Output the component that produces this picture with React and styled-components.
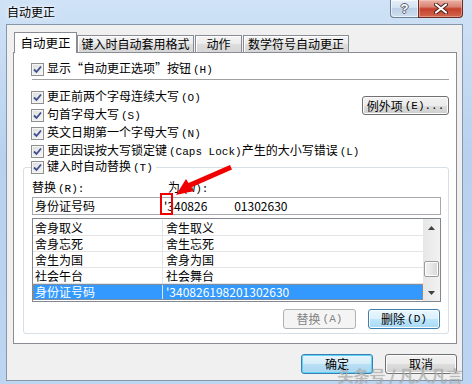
import React from 'react';
import styled, { createGlobalStyle } from 'styled-components';

const GlobalStyle = createGlobalStyle`
    html, body {
        margin: 0;
        padding: 0;
    }
    body {
        width: 472px;
        height: 384px;
        overflow: hidden;
        font-family: "Noto Sans CJK SC", "Noto Sans", sans-serif;
        font-size: 12px;
        color: #000;
    }
`;

const Window = styled.div`
    position: relative;
    width: 472px;
    height: 384px;
    box-sizing: border-box;
    padding: 0 9px 3px 6px;
    display: flex;
    flex-direction: column;
    overflow: hidden;
    background: linear-gradient(180deg, #cfe2f6 0%, #b8d2ee 40%, #bcd6f2 100%);
`;

const TitleBar = styled.div`
    height: 24px;
    flex-shrink: 0;
    display: flex;
    align-items: flex-start;
    justify-content: space-between;
`;

const Title = styled.div`
    padding: 5px 0 0 1px;
    font-size: 12px;
    line-height: 14px;
    text-shadow: 0 0 6px #fff, 0 0 3px #fff;
`;

const Controls = styled.div`
    display: flex;
`;

const HelpButton = styled.div`
    width: 28px;
    height: 18px;
    box-sizing: border-box;
    border: 1px solid #6a7f98;
    border-top: none;
    border-right: none;
    border-radius: 0 0 0 4px;
    background: linear-gradient(180deg, #e6eff9 0%, #d3e2f2 45%, #bccfe6 50%, #cfdff0 100%);
    box-shadow: inset 0 0 0 1px rgba(255, 255, 255, 0.6);
    display: flex;
    align-items: center;
    justify-content: center;
    font: bold 13px "Liberation Sans", sans-serif;
    color: #fff;
    text-shadow: 1px 0 0 #55606e, -1px 0 0 #55606e, 0 1px 0 #55606e, 0 -1px 0 #55606e;
`;

const CloseButton = styled.div`
    width: 45px;
    height: 18px;
    box-sizing: border-box;
    border: 1px solid #6b2c22;
    border-top: none;
    border-radius: 0 0 4px 0;
    background: linear-gradient(180deg, #eab2a6 0%, #d98372 40%, #c4402b 52%, #d2664f 100%);
    box-shadow: inset 0 0 0 1px rgba(255, 220, 210, 0.4);
    display: flex;
    align-items: center;
    justify-content: center;
`;

const Client = styled.div`
    flex: 1;
    display: flex;
    flex-direction: column;
    border: 1px solid #8796a9;
    background: #f0f0f0;
    padding: 7px 5px 0 6px;
`;

const TabStrip = styled.div`
    position: relative;
    z-index: 1;
    display: flex;
    align-items: flex-end;
    height: 21px;
    padding-left: 1px;
    margin-bottom: -1px;
`;

const Tab = styled.div`
    box-sizing: border-box;
    width: ${(p) => p.$w}px;
    margin-left: ${(p) => (p.$gap ? 1 : 0)}px;
    border: 1px solid #898c95;
    display: flex;
    align-items: center;
    justify-content: center;
    line-height: 14px;
    ${(p) =>
        p.$active
            ? `
        height: 21px;
        border-bottom: none;
        background: #fff;
        font-size: 12.5px;
    `
            : `
        height: 17px;
        margin-bottom: 1px;
        border-bottom: none;
        background: linear-gradient(180deg, #f4f4f4 0%, #ebebeb 50%, #dddddd 51%, #d6d6d6 100%);
        box-shadow: inset 1px 1px 0 #fff;
    `}
`;

const Pane = styled.div`
    height: 292px;
    box-sizing: border-box;
    border: 1px solid #898c95;
    background: #fff;
    padding: 7px 7px 0 9px;
`;

const CheckRow = styled.div`
    display: flex;
    align-items: center;
    height: 18px;
    margin-left: 8px;
    gap: 3px;
    white-space: nowrap;
    line-height: 14px;
`;

const Box = styled.span`
    width: 13px;
    height: 13px;
    box-sizing: border-box;
    flex-shrink: 0;
    border: 1px solid #8e8f8f;
    background: linear-gradient(135deg, #dcdcdc 0%, #f7f7f7 100%);
    box-shadow: inset 0 0 0 1px #f4f4f4;
    display: flex;
    align-items: center;
    justify-content: center;
`;

const Key = styled.span`
    font-family: "Liberation Mono", monospace;
    font-size: 11px;
    margin-left: 2px;
`;

const Separator = styled.div`
    margin: 1px 0 8px 9px;
    border-top: 1px solid #a0a0a0;
`;

const Section = styled.div`
    display: flex;
    justify-content: space-between;
    align-items: flex-start;
`;

const Column = styled.div`
    display: flex;
    flex-direction: column;
`;

const Button = styled.div`
    box-sizing: border-box;
    width: ${(p) => p.$w}px;
    height: ${(p) => p.$h || 19}px;
    margin-top: ${(p) => p.$top || 0}px;
    border: 1px solid #707070;
    border-radius: 3px;
    display: flex;
    align-items: center;
    justify-content: center;
    white-space: nowrap;
    line-height: 14px;
    background: linear-gradient(180deg, #f2f2f2 0%, #ebebeb 50%, #dddddd 51%, #cfcfcf 100%);
    box-shadow: inset 0 0 0 1px #fcfcfc;
    ${(p) =>
        p.$variant === 'disabled' &&
        `
        border-color: #adb2b5;
        background: #f4f4f4;
        color: #838383;
        box-shadow: none;
    `}
    ${(p) =>
        p.$variant === 'hot' &&
        `
        border-color: #3c7fb1;
        background: linear-gradient(180deg, #eaf6fd 0%, #d9f0fc 50%, #bee6fd 51%, #a7d9f5 100%);
    `}
    ${(p) =>
        p.$variant === 'default' &&
        `
        border-color: #3c7fb1;
        background: linear-gradient(180deg, #e8f5fc 0%, #d4ecf9 50%, #b9e0f5 51%, #a9d6f0 100%);
        box-shadow: inset 0 0 0 1px #5fd2f8;
    `}
`;

const Group = styled.fieldset`
    margin: -2px 0 0;
    padding: 0 7px 4px 8px;
    min-width: 0;
    border: 1px solid #d5dfe5;
    border-radius: 3px;
`;

const Legend = styled.legend`
    padding: 0 3px 0 0;
    margin-left: -1px;
    height: 18px;
    display: flex;
    align-items: center;
    gap: 3px;
    line-height: 14px;
`;

const LabelRow = styled.div`
    display: flex;
    height: 16px;
    margin-top: 4px;
    align-items: center;
    line-height: 14px;
`;

const Label = styled.div`
    width: ${(p) => p.$w || 'auto'};
`;

const InputRow = styled.div`
    display: flex;
    height: 18px;
    box-sizing: border-box;
    margin-top: 1px;
    border: 1px solid #a6a9ae;
    align-items: center;
    line-height: 14px;
`;

const InputCell = styled.div`
    width: ${(p) => p.$w || 'auto'};
    flex: ${(p) => (p.$w ? 'none' : 1)};
    padding-left: ${(p) => p.$pad}px;
    white-space: pre;
`;

const List = styled.div`
    display: flex;
    height: 84px;
    box-sizing: border-box;
    margin-top: 3px;
    border: 1px solid #828790;
`;

const Rows = styled.div`
    flex: 1;
    padding-top: 1px;
`;

const Row = styled.div`
    display: flex;
    height: 16px;
    box-sizing: border-box;
    border-bottom: 1px solid #e4e4e4;
    line-height: 14px;
    ${(p) =>
        p.$selected &&
        `
        background: #3399ff;
        color: #fff;
        border-bottom: none;
        outline: 1px dotted #c5834a;
        outline-offset: -1px;
    `}
`;

const Cell = styled.div`
    display: flex;
    align-items: center;
    box-sizing: border-box;
    width: ${(p) => (p.$first ? '130px' : 'auto')};
    flex: ${(p) => (p.$first ? 'none' : 1)};
    padding-left: ${(p) => (p.$first ? 2 : 3)}px;
    border-right: ${(p) => (p.$first ? '1px solid #e4e4e4' : 'none')};
    white-space: nowrap;
`;

const ScrollBar = styled.div`
    width: 17px;
    display: flex;
    flex-direction: column;
    background: linear-gradient(90deg, #e6e6e6 0%, #f2f2f2 100%);
`;

const Arrow = styled.div`
    height: 17px;
    display: flex;
    align-items: center;
    justify-content: center;
`;

const Track = styled.div`
    flex: 1;
`;

const Thumb = styled.div`
    width: 15px;
    height: 16px;
    margin-left: 1px;
    box-sizing: border-box;
    border: 1px solid #9a9a9a;
    border-radius: 2px;
    background: linear-gradient(90deg, #f2f2f2 0%, #e6e6e6 50%, #d6d6d6 100%);
    box-shadow: inset 0 0 0 1px #fdfdfd;
`;

const ActionRow = styled.div`
    display: flex;
    justify-content: flex-end;
    gap: 12px;
    margin-top: 7px;
    padding-right: 1px;
`;

const BottomBar = styled.div`
    display: flex;
    justify-content: flex-end;
    gap: 12px;
    margin-top: 10px;
`;

const Marker = styled.div`
    position: absolute;
    left: 160px;
    top: 193px;
    width: 13px;
    height: 22px;
    box-sizing: border-box;
    border: 2px solid #f00000;
`;

const Pointer = styled.svg`
    position: absolute;
    left: 170px;
    top: 160px;
`;

const Watermark = styled.div`
    position: absolute;
    right: 9px;
    bottom: 0;
    font-size: 16px;
    line-height: 18px;
    color: rgba(190, 190, 190, 0.85);
    text-shadow: 0 0 1px rgba(90, 90, 90, 0.6);
    white-space: pre;
`;

const Check = () => (
    <Box>
        <svg width="9" height="9" viewBox="0 0 9 9">
            <path d="M1 4.5 L3.5 7 L8 1.5" fill="none" stroke="#3c4f8f" strokeWidth="1.8" />
        </svg>
    </Box>
);

const Option = ({ children }) => (
    <CheckRow>
        <Check />
        <span>{children}</span>
    </CheckRow>
);

const entries = [
    ['舍身取义', '舍生取义'],
    ['舍身忘死', '舍生忘死'],
    ['舍生为国', '舍身为国'],
    ['社会午台', '社会舞台'],
    ['身份证号码', "'340826198201302630"],
];

export default () => {
    return (
        <Window>
            <GlobalStyle />
            <TitleBar>
                <Title>自动更正</Title>
                <Controls>
                    <HelpButton>?</HelpButton>
                    <CloseButton>
                        <svg width="14" height="11" viewBox="0 0 14 11">
                            <path d="M2 1.5 L12 9.5 M12 1.5 L2 9.5" stroke="#4a1d18" strokeWidth="4" strokeLinecap="round" />
                            <path d="M2 1.5 L12 9.5 M12 1.5 L2 9.5" stroke="#fff" strokeWidth="2.2" strokeLinecap="round" />
                        </svg>
                    </CloseButton>
                </Controls>
            </TitleBar>

            <Client>
                <TabStrip>
                    <Tab $active $w={63}>自动更正</Tab>
                    <Tab $w={117}>键入时自动套用格式</Tab>
                    <Tab $gap $w={47}>动作</Tab>
                    <Tab $gap $w={106}>数学符号自动更正</Tab>
                </TabStrip>

                <Pane>
                    <Option>
                        显示“自动更正选项”按钮<Key>(H)</Key>
                    </Option>
                    <Separator />
                    <Section>
                        <Column>
                            <Option>
                                更正前两个字母连续大写<Key>(O)</Key>
                            </Option>
                            <Option>
                                句首字母大写<Key>(S)</Key>
                            </Option>
                            <Option>
                                英文日期第一个字母大写<Key>(N)</Key>
                            </Option>
                            <Option>
                                更正因误按大写锁定键<Key>(Caps Lock)</Key>产生的大小写错误<Key>(L)</Key>
                            </Option>
                        </Column>
                        <Button $w={87} $top={8}>
                            例外项<Key>(E)...</Key>
                        </Button>
                    </Section>
                    <Group>
                        <Legend>
                            <Check />
                            <span>
                                键入时自动替换<Key>(T)</Key>
                            </span>
                        </Legend>
                        <LabelRow>
                            <Label $w="136px">
                                替换<Key>(R):</Key>
                            </Label>
                            <Label>
                                为<Key>(W):</Key>
                            </Label>
                        </LabelRow>
                        <InputRow>
                            <InputCell $w="128px" $pad={2}>身份证号码</InputCell>
                            <InputCell $pad={1}>{"'340826          01302630"}</InputCell>
                        </InputRow>
                        <List>
                            <Rows>
                                {entries.map(([a, b], i) => (
                                    <Row key={a} $selected={i === entries.length - 1}>
                                        <Cell $first>{a}</Cell>
                                        <Cell>{b}</Cell>
                                    </Row>
                                ))}
                            </Rows>
                            <ScrollBar>
                                <Arrow>
                                    <svg width="7" height="4" viewBox="0 0 7 4">
                                        <polygon points="0,4 3.5,0 7,4" fill="#404040" />
                                    </svg>
                                </Arrow>
                                <Track>
                                    <Thumb style={{ marginTop: 25 }} />
                                </Track>
                                <Arrow>
                                    <svg width="7" height="4" viewBox="0 0 7 4">
                                        <polygon points="0,0 7,0 3.5,4" fill="#404040" />
                                    </svg>
                                </Arrow>
                            </ScrollBar>
                        </List>
                        <ActionRow>
                            <Button $w={73} $h={20} $variant="disabled">
                                替换<Key>(A)</Key>
                            </Button>
                            <Button $w={72} $h={20} $variant="hot">
                                删除<Key>(D)</Key>
                            </Button>
                        </ActionRow>
                    </Group>
                </Pane>

                <BottomBar>
                    <Button $w={72} $h={20} $variant="default">确定</Button>
                    <Button $w={72} $h={20}>取消</Button>
                </BottomBar>
            </Client>

            <Marker />
            <Pointer width="70" height="40" viewBox="0 0 70 40">
                <polygon
                    points="6,35 24,31 21,27.5 62,9.5 60,5 18.5,23 16,19"
                    fill="#f00000"
                />
            </Pointer>
            <Watermark>头条号 / 凡人凡言</Watermark>
        </Window>
    );
};
